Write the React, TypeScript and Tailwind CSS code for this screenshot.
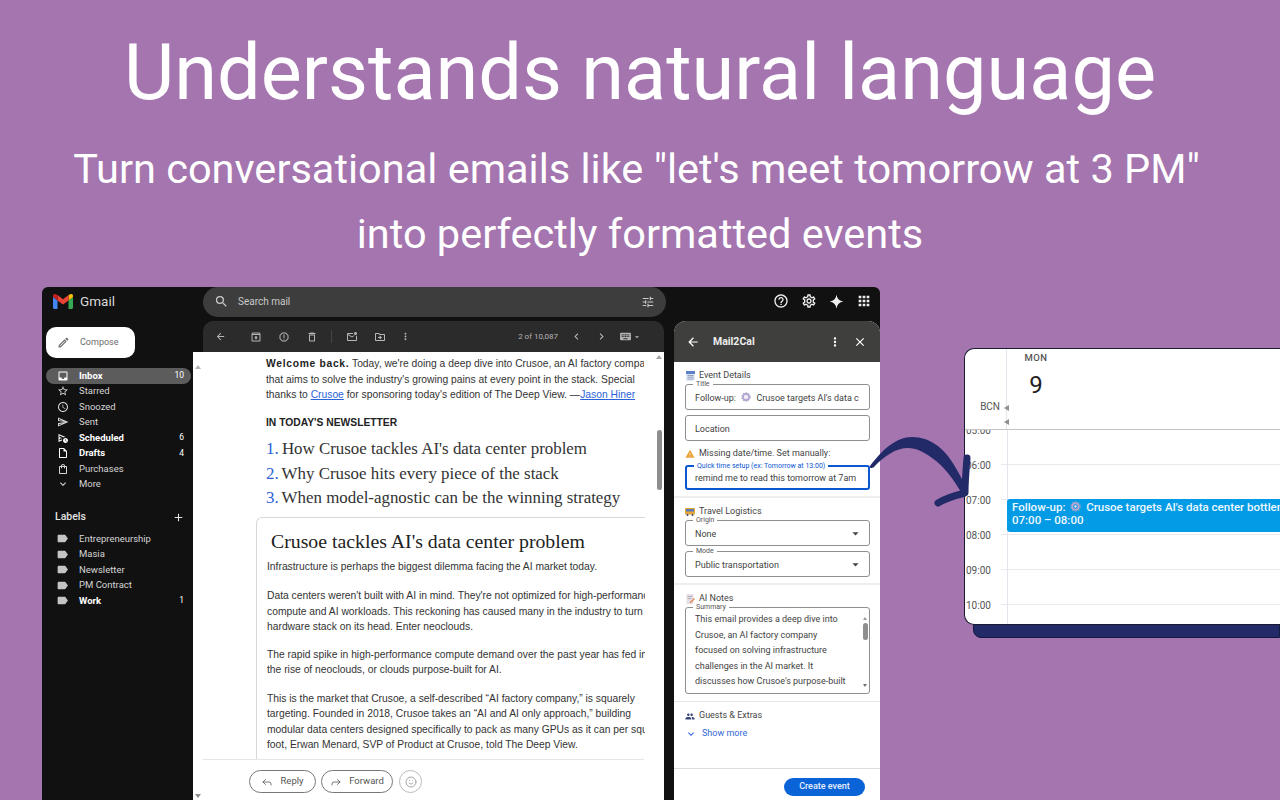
import React from "react";
import { Forward, Reply, Smile } from "lucide-react";
import {
  MdAccessTime,
  MdAdd,
  MdApps,
  MdArrowBack,
  MdArrowDropDown,
  MdChevronLeft,
  MdChevronRight,
  MdClose,
  MdExpandMore,
  MdHelpOutline,
  MdInbox,
  MdKeyboard,
  MdLabel,
  MdMoreVert,
  MdOutlineArchive,
  MdOutlineDelete,
  MdOutlineDriveFileMove,
  MdOutlineEdit,
  MdOutlineInsertDriveFile,
  MdOutlineMarkEmailUnread,
  MdOutlineReport,
  MdOutlineScheduleSend,
  MdOutlineSend,
  MdOutlineSettings,
  MdOutlineShoppingBag,
  MdPeople,
  MdSearch,
  MdStarBorder,
  MdTune,
  MdWarning,
} from "react-icons/md";

const navItems = [
  { name: "Inbox", icon: MdInbox, count: "10", bold: true, active: true },
  { name: "Starred", icon: MdStarBorder },
  { name: "Snoozed", icon: MdAccessTime },
  { name: "Sent", icon: MdOutlineSend },
  { name: "Scheduled", icon: MdOutlineScheduleSend, count: "6", bold: true },
  { name: "Drafts", icon: MdOutlineInsertDriveFile, count: "4", bold: true },
  { name: "Purchases", icon: MdOutlineShoppingBag },
  { name: "More", icon: MdExpandMore },
];

const labels = [
  { name: "Entrepreneurship" },
  { name: "Masia" },
  { name: "Newsletter" },
  { name: "PM Contract" },
  { name: "Work", count: "1", bold: true },
];

const hours = ["06:00", "07:00", "08:00", "09:00", "10:00"];

function GmailLogo() {
  return (
    <svg width="20" height="15" viewBox="0 0 20 15">
      <path d="M0 3v10.5C0 14.3.7 15 1.5 15H4.5V6.5z" fill="#4285f4" />
      <path d="M15.5 15h3c.8 0 1.5-.7 1.500-1.500V3l-4.500 3.500z" fill="#34a853" />
      <path d="M15.500 1v5.500L20 3V1.700C20 .3 18.400-.5 17.300.3z" fill="#fbbc04" />
      <path d="M4.500 6.500V1L10 5.200 15.500 1v5.500L10 10.600z" fill="#ea4335" />
      <path d="M0 1.700V3l4.500 3.500V1L2.700.3C1.600-.5 0 .3 0 1.700z" fill="#c5221f" />
    </svg>
  );
}

function Gear({ size = 10, className = "" }: { size?: number; className?: string }) {
  return (
    <svg width={size} height={size} viewBox="0 0 12 12" className={`inline-block align-[-1px] ${className}`}>
      <circle cx="6" cy="6" r="3.600" fill="none" stroke="#b9a6d6" strokeWidth="2.200" />
      <circle cx="6" cy="6" r="5" fill="none" stroke="#9aa7c4" strokeWidth="1.400" strokeDasharray="1.600 1.600" />
      <circle cx="6" cy="6" r="1.300" fill="#e7e3ee" />
    </svg>
  );
}

function Sidebar() {
  return (
    <aside className="flex w-[151px] shrink-0 flex-col text-[9.5px] text-[#d5d5d5]">
      <div className="flex h-[27px] items-center gap-[7px] pl-[11px] pt-[1px]">
        <GmailLogo />
        <span className="text-[13.5px] text-[#d9d9d9]">Gmail</span>
      </div>
      <div className="ml-[4px] mt-[13px] flex h-[31px] w-[89px] items-center gap-[10px] rounded-[10px] bg-white pl-[11px] text-[#6b6b6b]">
        <MdOutlineEdit size={13} />
        <span className="text-[9px]">Compose</span>
      </div>
      <nav className="mt-[10px] flex flex-col">
        {navItems.map((item) => (
          <div
            key={item.name}
            className={`ml-[4px] flex h-[15.5px] w-[145px] items-center rounded-full pl-[11px] pr-[7px] ${
              item.active ? "bg-[#5c5c5c] text-white" : ""
            } ${item.bold ? "font-bold text-white" : ""}`}
          >
            <item.icon size={12} className="shrink-0" />
            <span className="ml-[10px] flex-1">{item.name}</span>
            {item.count && <span className="text-[8.5px] font-normal">{item.count}</span>}
          </div>
        ))}
      </nav>
      <div className="ml-[13px] mr-[8px] mt-[17px] flex h-[16px] items-center justify-between text-[10.5px] font-medium text-[#e3e3e3]">
        <span>Labels</span>
        <MdAdd size={13} />
      </div>
      <div className="mt-[6px] flex flex-col">
        {labels.map((item) => (
          <div
            key={item.name}
            className={`ml-[4px] flex h-[15.5px] w-[145px] items-center pl-[10px] pr-[7px] ${
              item.bold ? "font-bold text-white" : ""
            }`}
          >
            <MdLabel size={13} className="shrink-0 text-[#c4c4c4]" />
            <span className="ml-[10px] flex-1">{item.name}</span>
            {item.count && <span className="text-[8.5px] font-normal">{item.count}</span>}
          </div>
        ))}
      </div>
    </aside>
  );
}

function MailToolbar() {
  return (
    <div className="flex h-[31px] shrink-0 items-center rounded-t-[10px] bg-[#2b2b2b] pl-[12px] pr-[25px] text-[#b5b5b5]">
      <MdArrowBack size={11} />
      <div className="ml-[24px] flex items-center gap-[16px]">
        <MdOutlineArchive size={12} />
        <MdOutlineReport size={12} />
        <MdOutlineDelete size={12} />
      </div>
      <div className="ml-[13px] mr-[14px] h-[13px] w-px bg-[#444]" />
      <div className="flex items-center gap-[16px]">
        <MdOutlineMarkEmailUnread size={12} />
        <MdOutlineDriveFileMove size={12} />
        <MdMoreVert size={11} className="-ml-[2px]" />
      </div>
      <span className="ml-auto text-[8px]">2 of 10,087</span>
      <MdChevronLeft size={13} className="ml-[12px]" />
      <MdChevronRight size={13} className="ml-[12px]" />
      <MdKeyboard size={13} className="ml-[11px]" />
      <MdArrowDropDown size={10} className="-mr-[3px]" />
    </div>
  );
}

function MailBody() {
  return (
    <div className="relative -ml-[10px] flex min-h-0 flex-1 flex-col bg-white text-[#333]">
      <div className="ml-[10px] flex min-h-0 flex-1 overflow-hidden">
        <div className="w-[442px] shrink-0 overflow-hidden pt-[4px] font-['Liberation_Sans',sans-serif] text-[10.3px] leading-[15.500px]">
          <div className="ml-[63px] whitespace-nowrap">
            <p className="w-[378px] overflow-hidden">
              <b className="tracking-[0.7px] text-[#222]">Welcome back.</b> Today, we're doing a deep dive into Crusoe, an AI factory company
            </p>
            <p>that aims to solve the industry's growing pains at every point in the stack. Special</p>
            <p>
              thanks to <span className="text-[#2b62d9] underline">Crusoe</span> for sponsoring today's edition of The
              Deep View. —<span className="text-[#2b62d9] underline">Jason Hiner</span>
            </p>
            <p className="mt-[12px] font-bold text-[#222]">IN TODAY'S NEWSLETTER</p>
            <ol className="mt-[7px] font-['Liberation_Serif',serif] text-[16.9px] leading-[24.500px]">
              <li><span className="mr-[-1px] text-[#2b62d9]">1.</span> How Crusoe tackles AI's data center problem</li>
              <li><span className="mr-[-1px] text-[#2b62d9]">2.</span> Why Crusoe hits every piece of the stack</li>
              <li><span className="mr-[-1px] text-[#2b62d9]">3.</span> When model-agnostic can be the winning strategy</li>
            </ol>
          </div>
          <div className="ml-[53px] mt-[6px] h-[300px] overflow-hidden whitespace-nowrap rounded-tl-[6px] border-l border-t border-[#d8d8d8] pl-[10px] pt-[10px]">
            <h2 className="pl-[4px] font-['Liberation_Serif',serif] text-[19.8px] leading-[26px] text-[#222]">
              Crusoe tackles AI's data center problem
            </h2>
            <p className="mt-[5px]">Infrastructure is perhaps the biggest dilemma facing the AI market today.</p>
            <p className="mt-[14px]">Data centers weren't built with AI in mind. They're not optimized for high-performance</p>
            <p>compute and AI workloads. This reckoning has caused many in the industry to turn their</p>
            <p>hardware stack on its head. Enter neoclouds.</p>
            <p className="mt-[12px]">The rapid spike in high-performance compute demand over the past year has fed into</p>
            <p>the rise of neoclouds, or clouds purpose-built for AI.</p>
            <p className="mt-[13px]">This is the market that Crusoe, a self-described “AI factory company,” is squarely</p>
            <p>targeting. Founded in 2018, Crusoe takes an “AI and AI only approach,” building</p>
            <p>modular data centers designed specifically to pack as many GPUs as it can per square</p>
            <p>foot, Erwan Menard, SVP of Product at Crusoe, told The Deep View.</p>
          </div>
        </div>
        <div className="flex w-[19px] shrink-0 flex-col items-center pl-[9px]">
          <div className="mt-[3px] h-0 w-0 border-x-[3px] border-b-[4px] border-x-transparent border-b-[#a5a5a5]" />
          <div className="mt-[71px] h-[60px] w-[5px] rounded-full bg-[#8d8d8d]" />
        </div>
      </div>
      <div className="ml-[10px] mr-[20px] flex h-[41px] shrink-0 items-center gap-[5px] border-t border-[#e6e6e6] pl-[46px] pt-[3px] text-[9.5px] text-[#555]">
        <button className="flex h-[23px] w-[67px] items-center justify-center gap-[7px] rounded-full border border-[#777]">
          <Reply size={12} strokeWidth={1.6} />
          Reply
        </button>
        <button className="flex h-[23px] w-[72px] items-center justify-center gap-[7px] rounded-full border border-[#777]">
          <Forward size={12} strokeWidth={1.6} />
          Forward
        </button>
        <button className="ml-[1px] flex h-[23px] w-[23px] items-center justify-center rounded-full border border-[#bbb] text-[#888]">
          <Smile size={12} strokeWidth={1.5} />
        </button>
      </div>
      <div className="absolute bottom-[2px] left-[2px] h-0 w-0 border-x-[3px] border-t-[4px] border-x-transparent border-t-[#8d8d8d]" />
      <div className="absolute left-[2px] top-[13px] h-0 w-0 border-x-[3px] border-b-[4px] border-x-transparent border-b-[#b5b5b5]" />
    </div>
  );
}

function FieldBox({
  label,
  value,
  focus,
  select,
  className = "",
}: {
  label?: string;
  value: React.ReactNode;
  focus?: boolean;
  select?: boolean;
  className?: string;
}) {
  return (
    <div
      className={`relative ml-[11px] mr-[10px] flex items-center whitespace-nowrap rounded-[3px] pr-[10px] ${
        focus ? "h-[25px] border-2 border-[#0b57d0] pl-[8px]" : "h-[26px] border border-[#8f8f8f] pl-[9px]"
      } ${className}`}
    >
      {label && (
        <span
          className={`absolute -top-[5px] left-[7px] bg-white px-[3px] text-[7px] leading-[8px] ${
            focus ? "text-[#0b57d0]" : "text-[#555]"
          }`}
        >
          {label}
        </span>
      )}
      <span className={`flex-1 overflow-hidden ${focus ? "pt-[2px]" : "pt-[4px]"}`}>{value}</span>
      {select && <MdArrowDropDown size={15} className="-mr-[4px] text-[#444]" />}
    </div>
  );
}

function SectionTitle({ icon, title }: { icon: React.ReactNode; title: string }) {
  return (
    <div className="mx-[11px] flex h-[14px] items-center gap-[4px] pt-[2px] text-[9px] text-[#444]">
      <span className="flex w-[10px] justify-center">{icon}</span>
      {title}
    </div>
  );
}

function CalendarEmoji() {
  return (
    <svg width="9" height="10" viewBox="0 0 9 10">
      <rect width="9" height="10" rx="1" fill="#dfe6f3" />
      <rect width="9" height="3" fill="#5b7fc9" />
      <path d="M1.500 4.500h6M1.500 6.200h6M1.500 8h6" stroke="#7f8db0" strokeWidth=".8" />
    </svg>
  );
}

function BusEmoji() {
  return (
    <svg width="10" height="8" viewBox="0 0 10 8">
      <rect width="10" height="6.500" rx="1" fill="#e5a33a" />
      <rect x="1" y="1" width="8" height="2.500" fill="#5a7fb0" />
      <circle cx="2.500" cy="7" r="1" fill="#33415c" />
      <circle cx="7.500" cy="7" r="1" fill="#33415c" />
    </svg>
  );
}

function NoteEmoji() {
  return (
    <svg width="9" height="10" viewBox="0 0 9 10">
      <rect x=".5" width="7" height="10" fill="#e7dfe6" />
      <path d="M1.500 2.500h5M1.500 4.500h4" stroke="#a9a3b0" strokeWidth=".8" />
      <path d="M3.500 8.500 8 4l1 1-4.500 4.500z" fill="#e08a5e" />
    </svg>
  );
}

function AddonPanel() {
  return (
    <section className="flex h-full w-[206px] shrink-0 flex-col overflow-hidden rounded-t-[12px] bg-white text-[9px] text-[#3f3f3f]">
      <header className="flex h-[41px] shrink-0 items-center bg-[#3f403e] pl-[12px] pr-[13px] text-white">
        <MdArrowBack size={14} />
        <span className="ml-[13px] flex-1 text-[10.5px] font-bold text-[#ececec]">Mail2Cal</span>
        <MdMoreVert size={14} />
        <MdClose size={14} className="ml-[11px]" />
      </header>
      <div className="flex h-[136px] shrink-0 flex-col border-b-2 border-[#eeeeee] pt-[6px]">
        <SectionTitle icon={<CalendarEmoji />} title="Event Details" />
        <FieldBox
          className="mt-[2px]"
          label="Title"
          value={
            <>
              Follow-up: <Gear className="mx-[3px]" /> Crusoe targets AI's data center bottlenecks
            </>
          }
        />
        <FieldBox className="mt-[5px]" value="Location" />
        <div className="mx-[11px] mt-[6px] flex h-[14px] items-center gap-[4px] text-[#444]">
          <MdWarning size={10} className="text-[#eba33c]" />
          Missing date/time. Set manually:
        </div>
        <FieldBox className="mt-[4px]" focus label="Quick time setup (ex: Tomorrow at 13:00)" value="remind me to read this tomorrow at 7am" />
      </div>
      <div className="flex h-[87px] shrink-0 flex-col border-b-2 border-[#eeeeee] pt-[6px]">
        <SectionTitle icon={<BusEmoji />} title="Travel Logistics" />
        <FieldBox className="mt-[2px]" label="Origin" value="None" select />
        <FieldBox className="mt-[5px]" label="Mode" value="Public transportation" select />
      </div>
      <div className="flex h-[117px] shrink-0 flex-col border-b border-[#e6e6e6] pt-[6px]">
        <SectionTitle icon={<NoteEmoji />} title="AI Notes" />
        <div className="relative ml-[11px] mr-[10px] mt-[2px] flex h-[87px] rounded-[3px] border border-[#8f8f8f] pl-[9px]">
          <span className="absolute -top-[5px] left-[7px] bg-white px-[3px] text-[7px] leading-[8px] text-[#555]">Summary</span>
          <p className="w-[160px] shrink-0 overflow-hidden whitespace-nowrap pt-[4px] leading-[15.500px]">
            This email provides a deep dive into
            <br />
            Crusoe, an AI factory company
            <br />
            focused on solving infrastructure
            <br />
            challenges in the AI market. It
            <br />
            discusses how Crusoe's purpose-built
          </p>
          <div className="ml-auto flex w-[8px] flex-col items-center pt-[9px]">
            <div className="h-0 w-0 border-x-[2.500px] border-b-[3px] border-x-transparent border-b-[#9a9a9a]" />
            <div className="mt-[3px] h-[17px] w-[5px] rounded-full bg-[#8f8f8f]" />
            <div className="mb-[6px] mt-auto h-0 w-0 border-x-[2.500px] border-t-[3px] border-x-transparent border-t-[#707070]" />
          </div>
        </div>
      </div>
      <div className="flex h-[67px] shrink-0 flex-col border-b border-[#dddddd] pt-[6px]">
        <SectionTitle icon={<MdPeople size={11} className="text-[#3c4a78]" />} title="Guests & Extras" />
        <div className="mx-[11px] mt-[5px] flex h-[14px] items-center gap-[5px] text-[#3367d6]">
          <MdExpandMore size={12} />
          Show more
        </div>
      </div>
      <div className="flex flex-1 items-start justify-end pr-[15px] pt-[9px]">
        <button className="flex h-[18px] w-[81px] items-center justify-center rounded-full bg-[#0b63d8] text-[9px] font-medium text-[#e8f0ff]">
          Create event
        </button>
      </div>
    </section>
  );
}

function GmailWindow() {
  return (
    <div className="absolute left-[42px] top-[287px] flex h-[513px] w-[838px] overflow-hidden rounded-t-[6px] bg-[#111111] font-['Roboto',sans-serif]">
      <Sidebar />
      <div className="flex min-w-0 flex-1 flex-col pl-[10px]">
        <div className="flex h-[34px] shrink-0 items-start">
          <div className="flex h-[30px] w-[463px] shrink-0 items-center rounded-full bg-[#3d3d3d] pb-[1px] pl-[11px] pr-[11px] text-[#c9c9c9]">
            <MdSearch size={15} />
            <span className="ml-[9px] flex-1 text-[10px]">Search mail</span>
            <MdTune size={14} />
          </div>
          <div className="ml-[107px] flex h-[28px] items-center gap-[12px] text-[#efefef]">
            <MdHelpOutline size={16} />
            <MdOutlineSettings size={16} />
            <svg width="15" height="15" viewBox="0 0 24 24" fill="currentColor">
              <path d="M12 1c1 6.500 4.500 10 11 11-6.500 1-10 4.500-11 11-1-6.500-4.500-10-11-11 6.500-1 10-4.500 11-11z" />
            </svg>
            <MdApps size={16} />
          </div>
        </div>
        <div className="flex min-h-0 flex-1">
          <div className="flex w-[461px] shrink-0 flex-col">
            <MailToolbar />
            <MailBody />
          </div>
          <div className="ml-[10px] h-full">
            <AddonPanel />
          </div>
        </div>
      </div>
    </div>
  );
}

function CalendarWindow() {
  return (
    <div className="absolute left-[964px] top-[348px] w-[316px] font-['Roboto',sans-serif]">
      <div className="absolute -bottom-[13px] left-[9px] right-0 h-[30px] rounded-bl-[8px] border border-[#14193f] bg-[#232a68]" />
      <div className="relative flex h-[277px] flex-col overflow-hidden rounded-l-[10px] border border-r-0 border-[#1a1a2e] bg-white">
        <div className="flex h-[81px] shrink-0 border-b border-[#c4c4c4]">
          <div className="relative w-[42px] shrink-0 border-r border-[#e6e6ef]">
            <span className="absolute right-[6px] top-[50px] text-[10px] text-[#555]">BCN</span>
            <div className="absolute -right-[3px] top-[56px] h-0 w-0 border-y-[3px] border-r-[5px] border-y-transparent border-r-[#8f8f8f]" />
            <div className="absolute -right-[3px] top-[70px] h-0 w-0 border-y-[3px] border-r-[5px] border-y-transparent border-r-[#8f8f8f]" />
          </div>
          <div className="flex w-[58px] flex-col items-center pt-[2px]">
            <span className="text-[9.5px] font-medium tracking-[0.5px] text-[#555]">MON</span>
            <span className="mt-[4px] text-[24px] leading-[32px] text-[#222]">9</span>
          </div>
        </div>
        <div className="relative flex min-h-0 flex-1 flex-col overflow-hidden">
          <span className="absolute -top-[5px] left-[1px] text-[10px] leading-[12px] text-[#555]">05:00</span>
          <div className="h-[34px] shrink-0" />
          {hours.map((hour) => (
            <div key={hour} className="flex h-[35px] shrink-0 items-start">
              <span className="-mt-[4px] w-[36px] shrink-0 pl-[1px] text-[10px] leading-[12px] text-[#555]">{hour}</span>
              <div className="flex-1 border-t border-[#e8e8ef]" />
            </div>
          ))}
          <div className="absolute bottom-0 left-[42px] top-0 w-px bg-[#e6e6ef]" />
          <div className="absolute left-[42px] right-0 top-[69px] h-[33px] overflow-hidden whitespace-nowrap rounded-l-[3px] bg-[#039be5] pl-[5px] pt-[2px] text-[11.5px] font-medium leading-[13px] text-[#eef8ff]">
            Follow-up: <Gear size={11} className="mx-[2px]" /> Crusoe targets AI's data center bottlenecks
            <br />
            07:00 – 08:00
          </div>
        </div>
      </div>
    </div>
  );
}

function Arrow() {
  return (
    <svg className="absolute left-[868px] top-[430px]" width="110" height="80" viewBox="0 0 110 80" fill="none">
      <path
        d="M2 36C14 20 28 7 44 7c18 0 32 11 42 28 6 10 11 19 14 29h-6C86 50 76 36 64 28 56 22 48 18 40 18 28 18 16 26 6 37c-2 2-5 1-4-1z"
        fill="#232a68"
      />
      <path d="M99 28c-1 12-2 24-2 35-8 2-19 5-27 10" stroke="#232a68" strokeWidth="7" strokeLinecap="round" strokeLinejoin="round" />
    </svg>
  );
}

export default function App() {
  return (
    <div className="relative h-[800px] w-full overflow-hidden bg-[#a475ae] font-['Roboto',sans-serif] text-white">
      <div className="flex flex-col items-center pt-[29px] text-center">
        <h1 className="text-[77.5px] font-normal leading-[88px]">Understands natural language</h1>
        <p className="mt-[19px] text-[41.5px] leading-[65px]">
          <span className="pr-[7px]">Turn conversational emails like "let's meet tomorrow at 3 PM"</span>
          <br />
          into perfectly formatted events
        </p>
      </div>
      <GmailWindow />
      <CalendarWindow />
      <Arrow />
    </div>
  );
}
